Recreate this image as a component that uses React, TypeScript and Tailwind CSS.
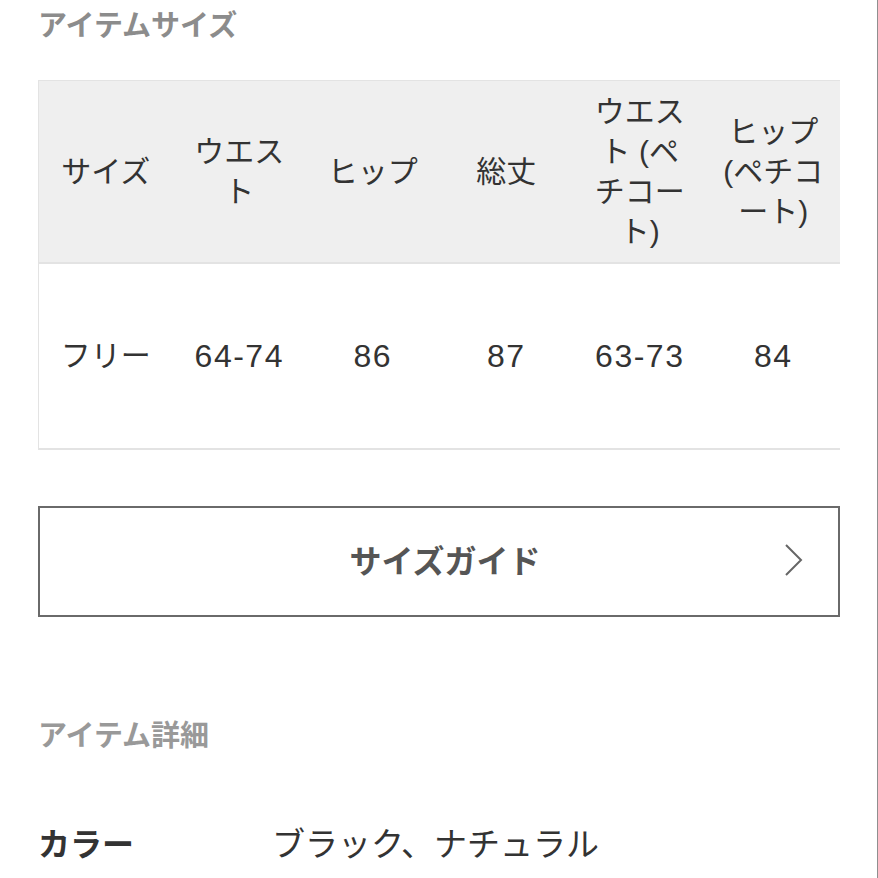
import React from "react";

const font = { fontFamily: '"Liberation Sans", "Noto Sans CJK JP", sans-serif' };

const headers: string[][] = [
  ["サイズ"],
  ["ウエス", "ト"],
  ["ヒップ"],
  ["総丈"],
  ["ウエス", "ト (ペ", "チコー", "ト)"],
  ["ヒップ", "(ペチコ", "ート)"],
];

const values = ["フリー", "64-74", "86", "87", "63-73", "84"];

export default function App() {
  return (
    <div
      className="w-[878px] min-h-[878px] bg-white border-r border-[#8f8f8f] overflow-hidden"
      style={font}
    >
      <div className="pl-[38px] pr-[38px]">
        <div className="h-[52px] flex items-center">
          <h2 className="text-[29px] leading-none font-bold text-[#8c8c8c]">アイテムサイズ</h2>
        </div>

        <div className="mt-[28px] w-[802px] border-l border-[#e3e3e3]">
          <div className="grid grid-cols-6 h-[184px] bg-[#efefef] border-t border-b-2 border-[#e3e3e3]">
            {headers.map((lines, i) => (
              <div key={i} className="flex items-center justify-center text-center">
                <div className="text-[30px] leading-[40px] text-[#333]">
                  {lines.map((l, j) => (
                    <div key={j}>{l}</div>
                  ))}
                </div>
              </div>
            ))}
          </div>
          <div className="grid grid-cols-6 h-[186px] bg-white border-b-2 border-[#e3e3e3]">
            {values.map((v, i) => (
              <div key={i} className="flex items-center justify-center text-center">
                <span
                  className={
                    i === 0
                      ? "text-[30px] leading-none text-[#333]"
                      : "text-[32px] leading-none tracking-[1.5px] text-[#333]"
                  }
                >
                  {v}
                </span>
              </div>
            ))}
          </div>
        </div>

        <button className="mt-[56px] w-[802px] h-[111px] border-2 border-[#6a6a6a] bg-white flex items-center relative">
          <span className="flex-1 text-center pl-[12px] text-[32px] font-bold text-[#555] leading-none">
            サイズガイド
          </span>
          <svg
            className="absolute left-[744px] top-[35px]"
            width="20"
            height="34"
            viewBox="0 0 20 34"
            fill="none"
          >
            <polyline points="2,2 17,17 2,32" stroke="#666" strokeWidth="2" fill="none" />
          </svg>
        </button>

        <div className="mt-[105px] h-[28px] flex items-center">
          <h3 className="text-[29px] leading-none font-bold text-[#999]">アイテム詳細</h3>
        </div>

        <div className="mt-[78px] flex items-center">
          <div className="w-[234px] text-[32px] leading-none font-bold text-[#333]">カラー</div>
          <div className="text-[33px] leading-none text-[#333]">ブラック、ナチュラル</div>
        </div>
      </div>
    </div>
  );
}
